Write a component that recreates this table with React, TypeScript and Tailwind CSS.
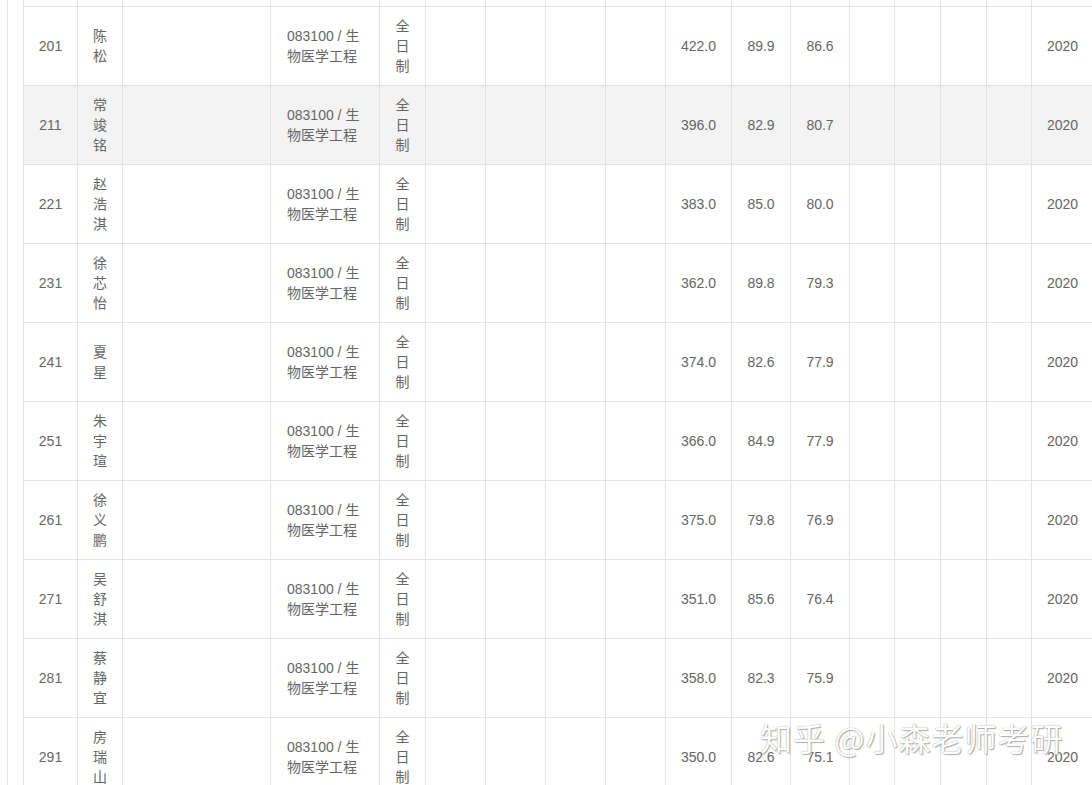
const rows = [
  { rank: "201", name: "陈松", total: "422.0", a: "89.9", b: "86.6" },
  { rank: "211", name: "常竣铭", total: "396.0", a: "82.9", b: "80.7", hover: true },
  { rank: "221", name: "赵浩淇", total: "383.0", a: "85.0", b: "80.0" },
  { rank: "231", name: "徐芯怡", total: "362.0", a: "89.8", b: "79.3" },
  { rank: "241", name: "夏星", total: "374.0", a: "82.6", b: "77.9" },
  { rank: "251", name: "朱宇瑄", total: "366.0", a: "84.9", b: "77.9" },
  { rank: "261", name: "徐义鹏", total: "375.0", a: "79.8", b: "76.9" },
  { rank: "271", name: "吴舒淇", total: "351.0", a: "85.6", b: "76.4" },
  { rank: "281", name: "蔡静宜", total: "358.0", a: "82.3", b: "75.9" },
  { rank: "291", name: "房瑞山", total: "350.0", a: "82.6", b: "75.1" },
];

const grid =
  "grid grid-cols-[54px_45px_148px_109px_46px_60px_60px_60px_60px_66px_59px_59px_45px_46px_46px_45px_62px] border-b border-[#e3e3e3]";

function Cell({ children }: { children?: React.ReactNode }) {
  return (
    <div className="flex items-center justify-center border-r border-[#e3e3e3] text-center">
      {children}
    </div>
  );
}

function Stacked({ text }: { text: string }) {
  return <div className="mx-auto w-[16px] break-all">{text}</div>;
}

export default function App() {
  return (
    <div className="relative h-[785px] w-[1092px] overflow-hidden bg-white font-['Liberation_Sans','Noto_Sans_CJK_SC',sans-serif] text-[14px] leading-[20px] text-[#666]">
      <div className="ml-[7px] h-full border-l border-[#e6e6e6] pl-[15px]">
        <div className="w-[1071px] border-l border-[#e3e3e3]">
          {/* previous row, scrolled out of view */}
          <div className={`${grid} h-[7px]`}>
            {Array.from({ length: 17 }).map((_, i) => (
              <Cell key={i} />
            ))}
          </div>

          {rows.map((r) => (
            <div key={r.rank} className={`${grid} h-[79px] ${r.hover ? "bg-[#f3f3f3]" : ""}`}>
              <Cell>{r.rank}</Cell>
              <Cell>
                <Stacked text={r.name} />
              </Cell>
              <Cell />
              <Cell>
                <div className="mx-auto w-[76px] text-left">083100 / 生物医学工程</div>
              </Cell>
              <Cell>
                <Stacked text="全日制" />
              </Cell>
              <Cell />
              <Cell />
              <Cell />
              <Cell />
              <Cell>{r.total}</Cell>
              <Cell>{r.a}</Cell>
              <Cell>{r.b}</Cell>
              <Cell />
              <Cell />
              <Cell />
              <Cell />
              <Cell>2020</Cell>
            </div>
          ))}
        </div>
      </div>

      {/* watermark */}
      <div className="pointer-events-none absolute left-[760px] top-[721px] whitespace-nowrap font-['Noto_Sans_CJK_SC',sans-serif] text-[32px] leading-none tracking-[1px] text-white [text-shadow:0_0_1px_#8a8a8a,1px_1px_1px_#b0b0b0]">
        知乎 @小森老师考研
      </div>
    </div>
  );
}
